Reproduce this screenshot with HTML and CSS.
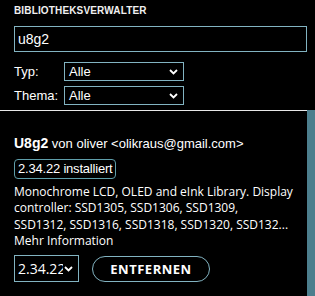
FILE: index.html
```html
<!DOCTYPE html>
<html lang="de">
<head>
<meta charset="utf-8">
<link rel="stylesheet" href="styles.css">
</head>
<body>
<div class="panel">
  <div class="top">
    <div class="title">BIBLIOTHEKSVERWALTER</div>
    <div class="search">u8g2</div>
    <div class="filter">
      <span class="label">Typ:</span>
      <div class="select wide"><span>Alle</span>
        <svg class="chev" width="9" height="6" viewBox="0 0 9 6"><path d="M1 1l3.5 3.5L8 1" fill="none" stroke="#fff" stroke-width="1.8"/></svg>
      </div>
    </div>
    <div class="filter">
      <span class="label">Thema:</span>
      <div class="select wide"><span>Alle</span>
        <svg class="chev" width="9" height="6" viewBox="0 0 9 6"><path d="M1 1l3.5 3.5L8 1" fill="none" stroke="#fff" stroke-width="1.8"/></svg>
      </div>
    </div>
  </div>
  <div class="list">
    <div class="content">
      <div class="heading"><b class="name">U8g2</b> von oliver &lt;olikraus@gmail.com&gt;</div>
      <div class="badge">2.34.22 installiert</div>
      <p class="desc">Monochrome LCD, OLED and eInk Library. Display controller: SSD1305, SSD1306, SSD1309, SSD1312, SSD1316, SSD1318, SSD1320, SSD132...<br>Mehr Information</p>
      <div class="actions">
        <div class="select version"><span class="vtext">2.34.22</span>
          <svg class="chev" width="9" height="6" viewBox="0 0 9 6"><path d="M1 1l3.5 3.5L8 1" fill="none" stroke="#fff" stroke-width="1.8"/></svg>
        </div>
        <div class="remove">ENTFERNEN</div>
      </div>
    </div>
    <div class="scrollbar"></div>
  </div>
</div>
</body>
</html>
```
FILE: styles.css
```css
html, body {
  margin: 0;
  padding: 0;
  background: #000;
  color: #fff;
  width: 315px;
  height: 296px;
  overflow: hidden;
}
.panel {
  font-family: "Liberation Sans", Arial, sans-serif;
  display: flex;
  flex-direction: column;
  height: 296px;
}
.top {
  padding: 5px 8px 0 14px;
  width: 293px;
}
.title {
  font-size: 10px;
  font-weight: bold;
  line-height: 12px;
  color: #f0f0f0;
  letter-spacing: 0.15px;
}
.search {
  margin-top: 9px;
  height: 24px;
  border: 1px solid #82b3c1;
  font-size: 14px;
  line-height: 24px;
  padding-left: 3px;
  box-sizing: content-box;
}
.filter {
  display: flex;
  align-items: center;
  margin-top: 10px;
  font-size: 13px;
}
.filter + .filter {
  margin-top: 5px;
}
.label {
  width: 50px;
}
.select {
  display: flex;
  align-items: center;
  justify-content: space-between;
  border: 1px solid #82b3c1;
  box-sizing: border-box;
  padding: 0 5px 0 4px;
}
.wide {
  width: 120px;
  height: 19px;
  font-size: 13px;
}
.chev {
  display: block;
  flex: none;
}
.list {
  flex: 1;
  display: flex;
  margin-top: 5px;
}
.content {
  flex: 1;
  border-top: 1px solid #e8e8e8;
  padding: 24px 0 0 14px;
}
.scrollbar {
  width: 8px;
  background: #4c7e8d;
}
.heading {
  font-size: 13px;
  line-height: 16px;
}
.name {
  font-size: 14px;
}
.badge {
  display: inline-block;
  margin-top: 7px;
  border: 1px solid #5f9eaa;
  border-radius: 4px;
  font-size: 13px;
  line-height: 18px;
  padding: 0 3px;
  letter-spacing: -0.2px;
}
.desc {
  margin: 5px 0 0;
  font-family: "Open Sans", "Noto Sans", sans-serif;
  font-size: 12px;
  line-height: 16.3px;
  padding-right: 14px;
}
.actions {
  display: flex;
  align-items: center;
  gap: 13px;
  margin-top: 6px;
}
.version {
  width: 65px;
  height: 27px;
  font-family: "Open Sans", "Noto Sans", sans-serif;
  font-size: 14px;
  padding: 0 5px 0 3px;
}
.vtext {
  width: 45px;
  overflow: hidden;
  white-space: nowrap;
}
.remove {
  width: 118px;
  height: 26px;
  box-sizing: border-box;
  border: 1px solid #82b3c1;
  border-radius: 13px;
  display: flex;
  align-items: center;
  justify-content: center;
  font-family: "Open Sans", "Noto Sans", sans-serif;
  font-weight: bold;
  font-size: 13px;
  letter-spacing: 0.5px;
}
```
